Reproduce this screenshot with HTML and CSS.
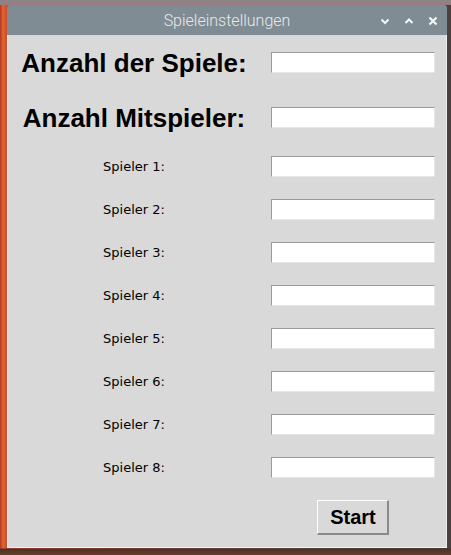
FILE: index.html
```html
<!DOCTYPE html>
<html lang="de">
<head>
<meta charset="utf-8">
<title>Spieleinstellungen</title>
<link rel="stylesheet" href="styles.css">
</head>
<body>
<div class="desktop">
  <div class="window">
    <div class="titlebar">
      <span class="title">Spieleinstellungen</span>
      <div class="controls">
        <svg class="ctl" width="12" height="12" viewBox="0 0 12 12"><path d="M2.5 4.5 L6 8 L9.5 4.5" fill="none" stroke="#f4f6f7" stroke-width="2"/></svg>
        <svg class="ctl" width="12" height="12" viewBox="0 0 12 12"><path d="M2.5 8 L6 4.5 L9.5 8" fill="none" stroke="#f4f6f7" stroke-width="2"/></svg>
        <svg class="ctl" width="12" height="12" viewBox="0 0 12 12"><path d="M2.5 2.5 L9.5 9.5 M9.5 2.5 L2.5 9.5" fill="none" stroke="#f4f6f7" stroke-width="2.2"/></svg>
      </div>
    </div>
    <div class="content">
      <div class="label big">Anzahl der Spiele:</div>
      <div class="cell"><div class="entry"></div></div>
      <div class="label big">Anzahl Mitspieler:</div>
      <div class="cell"><div class="entry"></div></div>
      <div class="label">Spieler 1:</div>
      <div class="cell"><div class="entry"></div></div>
      <div class="label">Spieler 2:</div>
      <div class="cell"><div class="entry"></div></div>
      <div class="label">Spieler 3:</div>
      <div class="cell"><div class="entry"></div></div>
      <div class="label">Spieler 4:</div>
      <div class="cell"><div class="entry"></div></div>
      <div class="label">Spieler 5:</div>
      <div class="cell"><div class="entry"></div></div>
      <div class="label">Spieler 6:</div>
      <div class="cell"><div class="entry"></div></div>
      <div class="label">Spieler 7:</div>
      <div class="cell"><div class="entry"></div></div>
      <div class="label">Spieler 8:</div>
      <div class="cell"><div class="entry"></div></div>
      <div></div>
      <div class="cell"><button class="start">Start</button></div>
    </div>
  </div>
</div>
</body>
</html>
```

FILE: styles.css
```css
html, body {
  margin: 0;
  padding: 0;
}
body {
  width: 451px;
  height: 555px;
  overflow: hidden;
}
.desktop {
  width: 451px;
  height: 555px;
  box-sizing: border-box;
  padding: 5px 0 0 7px;
  background:
    linear-gradient(180deg, #8c8488 0, #9a7c80 5px, rgba(0,0,0,0) 5px, rgba(0,0,0,0) 548px, #4a302a 549px, #6a3e2c 555px),
    linear-gradient(90deg, #a8382a 0, #e8662c 3px, #c84a2a 7px, #6a5452 60%, #4a4040 100%);
}
.window {
  width: 440px;
  height: 543px;
  display: flex;
  flex-direction: column;
  border-radius: 3px 3px 0 0;
  overflow: hidden;
}
.titlebar {
  height: 30px;
  flex: 0 0 30px;
  background: #7f8c93;
  position: relative;
  display: flex;
  align-items: center;
  justify-content: center;
}
.title {
  font-family: Roboto, "Open Sans", sans-serif;
  font-weight: 300;
  font-size: 16px;
  color: #e6eaec;
}
.controls {
  position: absolute;
  right: 8px;
  top: 10px;
  display: flex;
  gap: 12px;
}
.ctl {
  display: block;
}
.content {
  flex: 1;
  background: #d9d9d9;
  border-left: 1px solid #eeeeee;
  border-right: 1px solid #eeeeee;
  border-bottom: 1px solid #f2f2f2;
  display: grid;
  grid-template-columns: 252px 186px;
  grid-template-rows: 55px 55px repeat(8, 43px) 57px;
  align-items: center;
}
.label {
  text-align: center;
  font-family: "DejaVu Sans", sans-serif;
  font-size: 13px;
  color: #000;
  line-height: 16px;
}
.label.big {
  font-family: "Liberation Sans", Arial, sans-serif;
  font-weight: bold;
  font-size: 26px;
  line-height: 30px;
}
.cell {
  display: flex;
  justify-content: center;
}
.entry {
  width: 164px;
  height: 21px;
  box-sizing: border-box;
  background: #ffffff;
  border-top: 1px solid #9a9a9a;
  border-left: 1px solid #9a9a9a;
  border-bottom: 1px solid #e6e6e6;
  border-right: 1px solid #e6e6e6;
}
.start {
  width: 72px;
  height: 35px;
  box-sizing: border-box;
  background: #d9d9d9;
  border-top: 1px solid #ffffff;
  border-left: 1px solid #ffffff;
  border-bottom: 2px solid #8a8a8a;
  border-right: 2px solid #8a8a8a;
  font-family: "Liberation Sans", Arial, sans-serif;
  font-weight: bold;
  font-size: 20px;
  color: #000;
  padding: 0 0 0 1px;
}
```
